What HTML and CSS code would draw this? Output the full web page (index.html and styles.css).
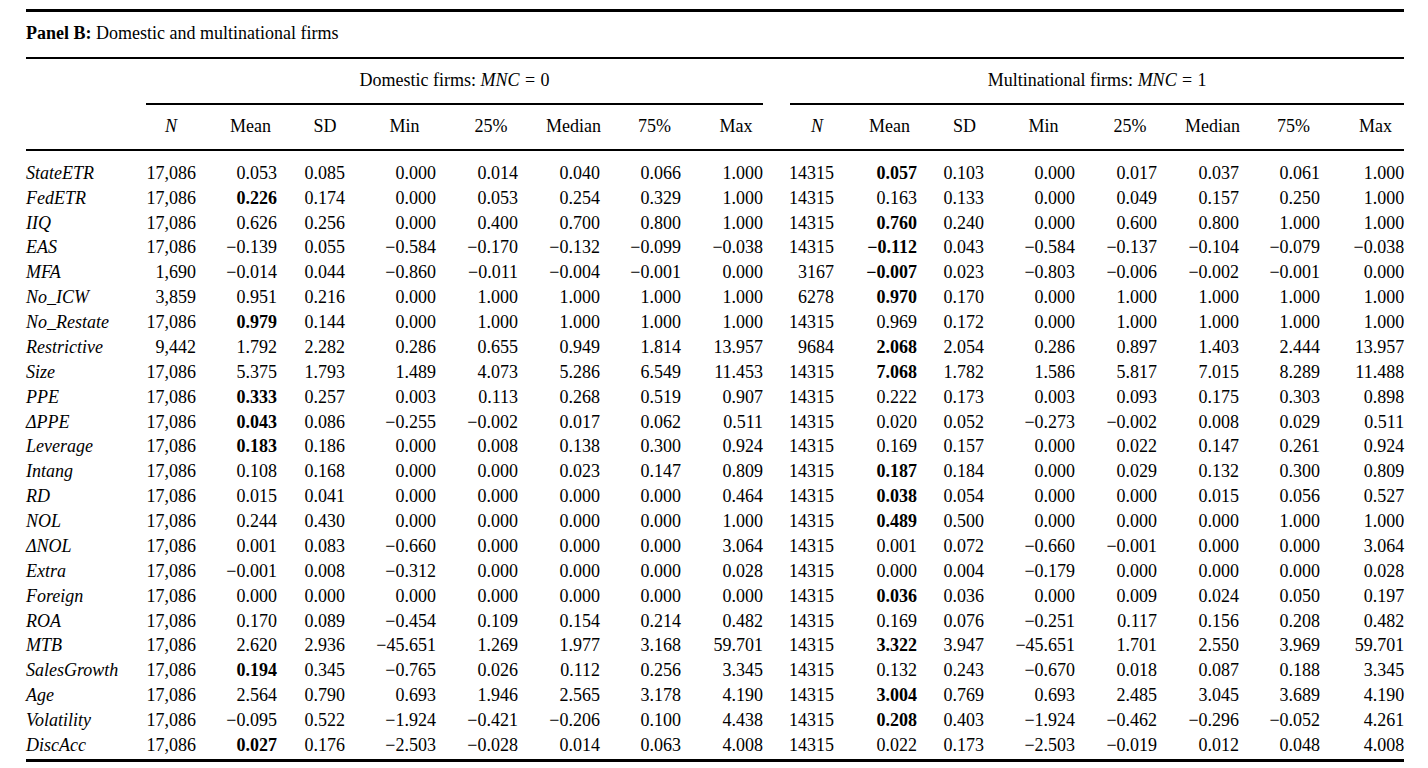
FILE: index.html
```html
<!DOCTYPE html>
<html lang="en">
<head>
<meta charset="utf-8">
<title>Panel B: Domestic and multinational firms</title>
<link rel="stylesheet" href="styles.css">
</head>
<body>
<div class="page">
  <div class="toprule"></div>
  <div class="title"><b>Panel B:</b> Domestic and multinational firms</div>
  <table class="stats">
    <colgroup>
      <col class="w120"><col class="w50"><col class="w81"><col class="w68"><col class="w91"><col class="w82"><col class="w82"><col class="w81"><col class="w82">
      <col class="w71"><col class="w83"><col class="w67"><col class="w91"><col class="w82"><col class="w82"><col class="w81"><col class="w84">
    </colgroup>
    <thead>
      <tr class="group">
        <th></th>
        <th colspan="8"><div class="grp">Domestic firms: <i>MNC</i><span class="eq">=</span>0</div></th>
        <th colspan="8"><div class="grp grp-multi">Multinational firms: <i>MNC</i><span class="eq">=</span>1</div></th>
      </tr>
      <tr class="cols">
        <th></th>
        <th><span class="h h-n1"><i>N</i></span></th>
        <th><span class="h">Mean</span></th>
        <th><span class="h">SD</span></th>
        <th><span class="h">Min</span></th>
        <th><span class="h">25%</span></th>
        <th><span class="h">Median</span></th>
        <th><span class="h">75%</span></th>
        <th><span class="h">Max</span></th>
        <th><span class="h h-n2"><i>N</i></span></th>
        <th><span class="h">Mean</span></th>
        <th><span class="h">SD</span></th>
        <th><span class="h">Min</span></th>
        <th><span class="h">25%</span></th>
        <th><span class="h">Median</span></th>
        <th><span class="h">75%</span></th>
        <th><span class="h h-last">Max</span></th>
      </tr>
    </thead>
    <tbody>
      <tr><td>StateETR</td><td>17,086</td><td>0.053</td><td>0.085</td><td>0.000</td><td>0.014</td><td>0.040</td><td>0.066</td><td>1.000</td><td>14315</td><td><b>0.057</b></td><td>0.103</td><td>0.000</td><td>0.017</td><td>0.037</td><td>0.061</td><td>1.000</td></tr>
      <tr><td>FedETR</td><td>17,086</td><td><b>0.226</b></td><td>0.174</td><td>0.000</td><td>0.053</td><td>0.254</td><td>0.329</td><td>1.000</td><td>14315</td><td>0.163</td><td>0.133</td><td>0.000</td><td>0.049</td><td>0.157</td><td>0.250</td><td>1.000</td></tr>
      <tr><td>IIQ</td><td>17,086</td><td>0.626</td><td>0.256</td><td>0.000</td><td>0.400</td><td>0.700</td><td>0.800</td><td>1.000</td><td>14315</td><td><b>0.760</b></td><td>0.240</td><td>0.000</td><td>0.600</td><td>0.800</td><td>1.000</td><td>1.000</td></tr>
      <tr><td>EAS</td><td>17,086</td><td>−0.139</td><td>0.055</td><td>−0.584</td><td>−0.170</td><td>−0.132</td><td>−0.099</td><td>−0.038</td><td>14315</td><td><b>−0.112</b></td><td>0.043</td><td>−0.584</td><td>−0.137</td><td>−0.104</td><td>−0.079</td><td>−0.038</td></tr>
      <tr><td>MFA</td><td>1,690</td><td>−0.014</td><td>0.044</td><td>−0.860</td><td>−0.011</td><td>−0.004</td><td>−0.001</td><td>0.000</td><td>3167</td><td><b>−0.007</b></td><td>0.023</td><td>−0.803</td><td>−0.006</td><td>−0.002</td><td>−0.001</td><td>0.000</td></tr>
      <tr><td>No_ICW</td><td>3,859</td><td>0.951</td><td>0.216</td><td>0.000</td><td>1.000</td><td>1.000</td><td>1.000</td><td>1.000</td><td>6278</td><td><b>0.970</b></td><td>0.170</td><td>0.000</td><td>1.000</td><td>1.000</td><td>1.000</td><td>1.000</td></tr>
      <tr><td>No_Restate</td><td>17,086</td><td><b>0.979</b></td><td>0.144</td><td>0.000</td><td>1.000</td><td>1.000</td><td>1.000</td><td>1.000</td><td>14315</td><td>0.969</td><td>0.172</td><td>0.000</td><td>1.000</td><td>1.000</td><td>1.000</td><td>1.000</td></tr>
      <tr><td>Restrictive</td><td>9,442</td><td>1.792</td><td>2.282</td><td>0.286</td><td>0.655</td><td>0.949</td><td>1.814</td><td>13.957</td><td>9684</td><td><b>2.068</b></td><td>2.054</td><td>0.286</td><td>0.897</td><td>1.403</td><td>2.444</td><td>13.957</td></tr>
      <tr><td>Size</td><td>17,086</td><td>5.375</td><td>1.793</td><td>1.489</td><td>4.073</td><td>5.286</td><td>6.549</td><td>11.453</td><td>14315</td><td><b>7.068</b></td><td>1.782</td><td>1.586</td><td>5.817</td><td>7.015</td><td>8.289</td><td>11.488</td></tr>
      <tr><td>PPE</td><td>17,086</td><td><b>0.333</b></td><td>0.257</td><td>0.003</td><td>0.113</td><td>0.268</td><td>0.519</td><td>0.907</td><td>14315</td><td>0.222</td><td>0.173</td><td>0.003</td><td>0.093</td><td>0.175</td><td>0.303</td><td>0.898</td></tr>
      <tr><td>ΔPPE</td><td>17,086</td><td><b>0.043</b></td><td>0.086</td><td>−0.255</td><td>−0.002</td><td>0.017</td><td>0.062</td><td>0.511</td><td>14315</td><td>0.020</td><td>0.052</td><td>−0.273</td><td>−0.002</td><td>0.008</td><td>0.029</td><td>0.511</td></tr>
      <tr><td>Leverage</td><td>17,086</td><td><b>0.183</b></td><td>0.186</td><td>0.000</td><td>0.008</td><td>0.138</td><td>0.300</td><td>0.924</td><td>14315</td><td>0.169</td><td>0.157</td><td>0.000</td><td>0.022</td><td>0.147</td><td>0.261</td><td>0.924</td></tr>
      <tr><td>Intang</td><td>17,086</td><td>0.108</td><td>0.168</td><td>0.000</td><td>0.000</td><td>0.023</td><td>0.147</td><td>0.809</td><td>14315</td><td><b>0.187</b></td><td>0.184</td><td>0.000</td><td>0.029</td><td>0.132</td><td>0.300</td><td>0.809</td></tr>
      <tr><td>RD</td><td>17,086</td><td>0.015</td><td>0.041</td><td>0.000</td><td>0.000</td><td>0.000</td><td>0.000</td><td>0.464</td><td>14315</td><td><b>0.038</b></td><td>0.054</td><td>0.000</td><td>0.000</td><td>0.015</td><td>0.056</td><td>0.527</td></tr>
      <tr><td>NOL</td><td>17,086</td><td>0.244</td><td>0.430</td><td>0.000</td><td>0.000</td><td>0.000</td><td>0.000</td><td>1.000</td><td>14315</td><td><b>0.489</b></td><td>0.500</td><td>0.000</td><td>0.000</td><td>0.000</td><td>1.000</td><td>1.000</td></tr>
      <tr><td>ΔNOL</td><td>17,086</td><td>0.001</td><td>0.083</td><td>−0.660</td><td>0.000</td><td>0.000</td><td>0.000</td><td>3.064</td><td>14315</td><td>0.001</td><td>0.072</td><td>−0.660</td><td>−0.001</td><td>0.000</td><td>0.000</td><td>3.064</td></tr>
      <tr><td>Extra</td><td>17,086</td><td>−0.001</td><td>0.008</td><td>−0.312</td><td>0.000</td><td>0.000</td><td>0.000</td><td>0.028</td><td>14315</td><td>0.000</td><td>0.004</td><td>−0.179</td><td>0.000</td><td>0.000</td><td>0.000</td><td>0.028</td></tr>
      <tr><td>Foreign</td><td>17,086</td><td>0.000</td><td>0.000</td><td>0.000</td><td>0.000</td><td>0.000</td><td>0.000</td><td>0.000</td><td>14315</td><td><b>0.036</b></td><td>0.036</td><td>0.000</td><td>0.009</td><td>0.024</td><td>0.050</td><td>0.197</td></tr>
      <tr><td>ROA</td><td>17,086</td><td>0.170</td><td>0.089</td><td>−0.454</td><td>0.109</td><td>0.154</td><td>0.214</td><td>0.482</td><td>14315</td><td>0.169</td><td>0.076</td><td>−0.251</td><td>0.117</td><td>0.156</td><td>0.208</td><td>0.482</td></tr>
      <tr><td>MTB</td><td>17,086</td><td>2.620</td><td>2.936</td><td>−45.651</td><td>1.269</td><td>1.977</td><td>3.168</td><td>59.701</td><td>14315</td><td><b>3.322</b></td><td>3.947</td><td>−45.651</td><td>1.701</td><td>2.550</td><td>3.969</td><td>59.701</td></tr>
      <tr><td>SalesGrowth</td><td>17,086</td><td><b>0.194</b></td><td>0.345</td><td>−0.765</td><td>0.026</td><td>0.112</td><td>0.256</td><td>3.345</td><td>14315</td><td>0.132</td><td>0.243</td><td>−0.670</td><td>0.018</td><td>0.087</td><td>0.188</td><td>3.345</td></tr>
      <tr><td>Age</td><td>17,086</td><td>2.564</td><td>0.790</td><td>0.693</td><td>1.946</td><td>2.565</td><td>3.178</td><td>4.190</td><td>14315</td><td><b>3.004</b></td><td>0.769</td><td>0.693</td><td>2.485</td><td>3.045</td><td>3.689</td><td>4.190</td></tr>
      <tr><td>Volatility</td><td>17,086</td><td>−0.095</td><td>0.522</td><td>−1.924</td><td>−0.421</td><td>−0.206</td><td>0.100</td><td>4.438</td><td>14315</td><td><b>0.208</b></td><td>0.403</td><td>−1.924</td><td>−0.462</td><td>−0.296</td><td>−0.052</td><td>4.261</td></tr>
      <tr><td>DiscAcc</td><td>17,086</td><td><b>0.027</b></td><td>0.176</td><td>−2.503</td><td>−0.028</td><td>0.014</td><td>0.063</td><td>4.008</td><td>14315</td><td>0.022</td><td>0.173</td><td>−2.503</td><td>−0.019</td><td>0.012</td><td>0.048</td><td>4.008</td></tr>
    </tbody>
  </table>
</div>
</body>
</html>
```
FILE: styles.css
```css
* { box-sizing: border-box; }
html, body { margin: 0; padding: 0; background: #fff; }
body {
  font-family: "Liberation Serif", "Times New Roman", serif;
  font-size: 18px;
  color: #000;
}
.page {
  width: 1378px;
  margin-left: 26px;
  padding-top: 9px;
}
.toprule { border-top: 3px solid #000; }
.title {
  line-height: 24px;
  padding: 9px 0 12px;
}
.stats {
  width: 1378px;
  table-layout: fixed;
  border-collapse: separate;
  border-spacing: 0;
  border-top: 2px solid #000;
  border-bottom: 3px solid #000;
}
.w120 { width: 120px; }
.w50 { width: 50px; }
.w67 { width: 67px; }
.w68 { width: 68px; }
.w71 { width: 71px; }
.w81 { width: 81px; }
.w82 { width: 82px; }
.w83 { width: 83px; }
.w84 { width: 84px; }
.w91 { width: 91px; }
.stats th {
  font-weight: normal;
  padding: 0;
  text-align: center;
  line-height: 24px;
  white-space: nowrap;
}
.group th { padding-top: 9px; }
.grp {
  border-bottom: 2px solid #000;
  padding-bottom: 11px;
}
.grp-multi { margin-left: 27px; }
.eq { margin: 0 0.3em; }
.cols th {
  padding-top: 9px;
  padding-bottom: 11px;
  border-bottom: 2px solid #000;
}
.h { display: block; margin-left: 28px; }
.h-n1 { margin-left: 0; }
.h-n2 { margin-left: 37px; }
.h-last { margin-left: 27px; }
.stats td {
  padding: 0;
  line-height: 24.88px;
  text-align: right;
  white-space: nowrap;
}
.stats td:first-child {
  text-align: left;
  font-style: italic;
}
.stats tbody tr:first-child td { padding-top: 9.85px; }
.stats tbody tr:last-child td { padding-bottom: 1px; }
```
